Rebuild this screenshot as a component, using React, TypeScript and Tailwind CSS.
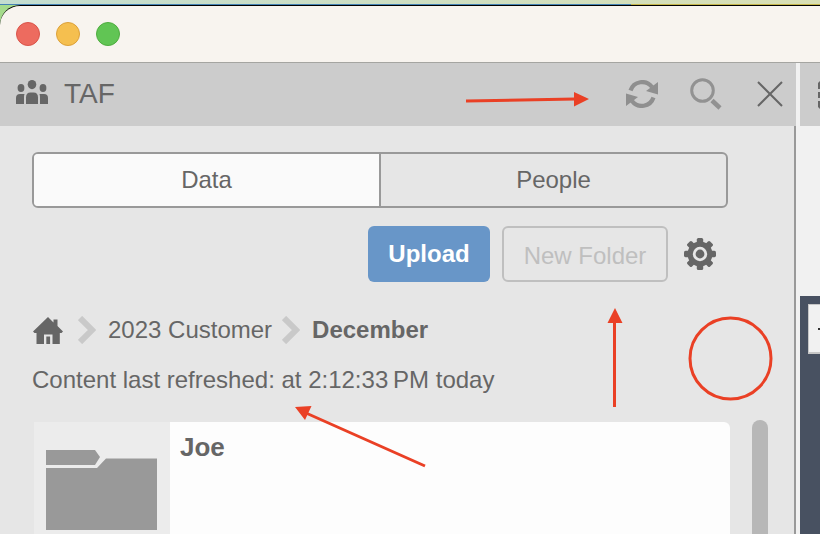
import { useState } from "react";
import type { ReactNode } from "react";

type Tab = "Data" | "People";

const tabs: Tab[] = ["Data", "People"];
const trafficLights = [
  { label: "Close window", style: "border-[#d9544a] bg-[#ed6b5f]" },
  { label: "Minimize window", style: "border-[#dba03a] bg-[#f5bf4f]" },
  { label: "Zoom window", style: "border-[#4fac3f] bg-[#61c554]" },
];

function PeopleIcon() {
  return (
    <svg viewBox="0 0 32 24" className="h-6 w-8 fill-[#666]" aria-hidden="true">
      <ellipse cx="16" cy="4.6" rx="4.3" ry="4.6" />
      <ellipse cx="5" cy="8" rx="3.4" ry="3.9" />
      <ellipse cx="27" cy="8" rx="3.4" ry="3.9" />
      <path d="M10 24v-6.500q0-5 4.500-5h3q4.500 0 4.500 5V24z" />
      <path d="M0 24v-6q0-4 4-4h4.500q-.5 1.500-.5 3v7z" />
      <path d="M32 24v-6q0-4-4-4h-4.500q.5 1.500.5 3v7z" />
    </svg>
  );
}

function RefreshIcon() {
  return (
    <svg viewBox="0 0 32 28" className="h-7 w-8" aria-hidden="true">
      <path d="M4.500 10.500A12.300 12.300 0 0 1 26 7M27.500 17.500A12.300 12.300 0 0 1 6 21" fill="none" stroke="#8f8f8f" strokeWidth="4.200" />
      <path d="M32 2v12.500L20 11zM0 13.500L12 17 0 26z" fill="#8f8f8f" />
    </svg>
  );
}

function SearchIcon() {
  return (
    <svg viewBox="0 0 32 32" className="size-8" fill="none" stroke="#929292" aria-hidden="true">
      <circle cx="12.500" cy="12.500" r="10.800" strokeWidth="3" />
      <path d="M22 22.500l8 7.500" strokeWidth="4.500" />
    </svg>
  );
}

function CloseIcon() {
  return (
    <svg viewBox="0 0 26 26" className="size-[26px]" fill="none" stroke="#666" strokeWidth="2" aria-hidden="true">
      <path d="M1 1l24 24M25 1L1 25" />
    </svg>
  );
}

function GearIcon() {
  return (
    <svg viewBox="-16 -16 32 32" className="size-8" aria-hidden="true">
      <g fill="#666">
        <circle r="12.500" />
        {[0, 45, 90, 135].map((angle) => (
          <rect key={angle} x="-3.200" y="-16" width="6.400" height="32" rx="1.600" transform={`rotate(${angle})`} />
        ))}
      </g>
      <circle r="5.800" fill="#666" stroke="#e6e6e6" strokeWidth="2.800" />
    </svg>
  );
}

function HomeIcon() {
  return (
    <svg viewBox="0 0 30 28" className="h-7 w-[30px] fill-[#666]" aria-hidden="true">
      <path d="M15 1l5.500 5.500V3.500H24.500V10L30 15.500l-1.500 1.500H26.800V28H19.500V18.500H11V28H3.500V17h-2L0 15.500z" />
      <path d="M13.300 20.500h3.800V28h-3.800z" />
    </svg>
  );
}

function Chevron() {
  return (
    <svg viewBox="0 0 18 28" className="h-7 w-[18px]" fill="none" stroke="#c9c9c9" strokeWidth="6" aria-hidden="true">
      <path d="M2 2l12 12L2 26" />
    </svg>
  );
}

function FolderIcon() {
  return (
    <svg viewBox="0 0 112 82" className="h-[82px] w-28 fill-[#999]" aria-hidden="true">
      <path d="M0 0h49l5 7-5 8H0z" />
      <path d="M0 18h51l9-9.500H111V80H0z" />
    </svg>
  );
}

function IconButton({ label, children }: { label: string; children: ReactNode }) {
  return (
    <button type="button" aria-label={label} className="flex size-8 shrink-0 items-center justify-center">
      {children}
    </button>
  );
}

// Red arrows and circle drawn over the window.
function Annotations() {
  return (
    <svg className="pointer-events-none absolute left-0 top-0" width="820" height="534" aria-hidden="true">
      <g fill="none" stroke="#ea4025" strokeWidth="3">
        <path d="M466 101l109-2M614.500 407V322M425 466L306 413" />
        <circle cx="730.500" cy="358.500" r="40.500" />
      </g>
      <path d="M574 92l15 7-15 7.500zM607.500 323l7.500-15 7.500 15zM295 407l16.500-1-6.500 14z" fill="#ea4025" />
    </svg>
  );
}

export default function App() {
  const [active, setActive] = useState<Tab>("Data");

  return (
    <div className="relative flex h-screen flex-col overflow-hidden bg-gradient-to-r from-[#c3ddd0] to-[#d9dfb4] pt-1 font-['Liberation_Sans',Arial,sans-serif] text-2xl text-[#666]">
      <div className="h-px shrink-0 bg-[linear-gradient(to_right,#4583b5_77%,#c5b64c_77%)]" />
      <div className="flex min-h-0 flex-1 flex-col bg-[#a5dc8c]">
        <div className="flex min-h-0 flex-1 flex-col overflow-hidden rounded-tl-[20px] border-t border-black bg-[#f8f4ef]">
          <div className="flex h-[57px] shrink-0 items-center gap-4 border-b border-[#a5a5a1] px-4">
            {trafficLights.map((light) => (
              <button key={light.label} type="button" aria-label={light.label} className={`size-6 rounded-full border ${light.style}`} />
            ))}
          </div>

          <div className="flex min-h-0 flex-1">
            <main className="flex min-w-0 flex-1 flex-col bg-[#e6e6e6]">
              <header className="flex h-[63px] shrink-0 items-center gap-8 bg-[#ccc] pb-0.5 pl-4 pr-[10px]">
                <div className="flex flex-1 items-center gap-4">
                  <div className="pb-1"><PeopleIcon /></div>
                  <h1 className="text-[28px] leading-8">TAF</h1>
                </div>
                <IconButton label="Refresh"><RefreshIcon /></IconButton>
                <IconButton label="Search"><SearchIcon /></IconButton>
                <IconButton label="Close"><CloseIcon /></IconButton>
              </header>

              <div className="flex min-h-0 flex-1 flex-col border-r-2 border-[#999] pl-8 pr-[26px] pt-[26px]">
                <div role="tablist" className="mr-10 flex h-14 shrink-0 overflow-hidden rounded-md border-2 border-[#999]">
                  {tabs.map((tab) => (
                    <button
                      key={tab}
                      type="button"
                      role="tab"
                      aria-selected={active === tab}
                      onClick={() => setActive(tab)}
                      className={`flex-1 border-[#999] first:border-r-2 ${active === tab ? "bg-[#fafafa]" : ""}`}
                    >
                      {tab}
                    </button>
                  ))}
                </div>

                <div className="mr-[52px] mt-[18px] flex shrink-0 items-center justify-end">
                  <button type="button" className="h-14 w-[122px] rounded-md bg-[#6896c8] font-bold text-white">Upload</button>
                  <button type="button" disabled className="ml-3 mr-4 h-14 w-[166px] rounded-md border-2 border-[#bfbfbf] pt-1 text-[#bfbfbf]">
                    New Folder
                  </button>
                  <IconButton label="Settings"><GearIcon /></IconButton>
                </div>

                <nav aria-label="Breadcrumb" className="mt-8 flex shrink-0 items-center">
                  <a href="#home" aria-label="Home" className="ml-px mr-[15px]"><HomeIcon /></a>
                  <Chevron />
                  <a href="#customer" className="ml-3 mr-[10px]">2023 Customer</a>
                  <Chevron />
                  <span aria-current="page" className="ml-3 font-bold">December</span>
                </nav>
                <p className="mt-[18px] shrink-0">Content last refreshed: at 2:12:33{"\u202f"}PM today</p>

                <div className="mt-6 flex min-h-0 flex-1 justify-between">
                  <a href="#joe" className="ml-0.5 mr-[22px] mt-0.5 flex flex-1 overflow-hidden rounded-tr-md bg-[#fdfdfd]">
                    <div className="w-[136px] shrink-0 bg-[#ececec] pl-3 pt-7"><FolderIcon /></div>
                    <h2 className="pl-[10px] pt-[9px] text-[26px] font-bold leading-8">Joe</h2>
                  </a>
                  <div className="w-4 shrink-0 rounded-t-full bg-[#b7b7b7]" />
                </div>
              </div>
            </main>

            <aside className="flex w-6 shrink-0 flex-col overflow-hidden bg-[#f1f1f1] pl-1">
              <div className="flex h-[63px] shrink-0 items-center bg-[#ccc] pl-[18px]">
                <svg width="14" height="28" className="shrink-0 fill-[#666]" aria-hidden="true">
                  <path d="M2 0h12v8H0V2zM0 11h14v6H0zM0 20h14v8H2l-2-2z" />
                </svg>
              </div>
              <div className="mt-[170px] flex-1 bg-[#485161] pl-2 pt-2">
                <button type="button" aria-label="Zoom in" className="flex h-[50px] w-12 items-center border border-b-2 border-[#c6c6c6] bg-[#f1f1f1] pl-[9px]">
                  <svg width="18" height="18" stroke="#333" strokeWidth="2" aria-hidden="true"><path d="M0 9h18M9 0v18" /></svg>
                </button>
              </div>
            </aside>
          </div>
        </div>
      </div>
      <Annotations />
    </div>
  );
}
